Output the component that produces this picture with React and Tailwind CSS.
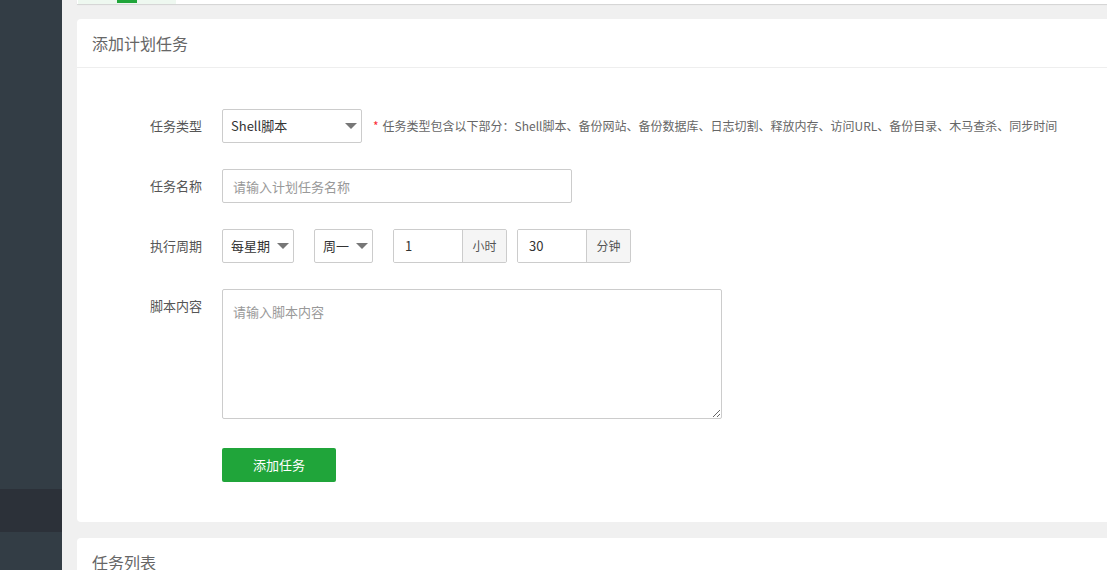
const FONT = { fontFamily: '"Noto Sans CJK SC", "Noto Sans", sans-serif' };

function Caret() {
  return (
    <span className="ml-auto w-0 h-0 border-l-[6px] border-r-[6px] border-t-[6px] border-l-transparent border-r-transparent border-t-[#777]" />
  );
}

function Row({ label, children, top = false }) {
  return (
    <div className={`flex ${top ? "items-start" : "items-center"}`}>
      <div className="w-[125px] shrink-0 text-right leading-[34px] text-[13px] text-[#555]">{label}</div>
      <div className="ml-[20px] flex items-center">{children}</div>
    </div>
  );
}

function Select({ value, w }) {
  return (
    <div
      className={`${w} h-[34px] flex items-center border border-[#ccc] rounded-[2px] bg-white pl-[8px] pr-[4px] text-[13px] text-[#333]`}
    >
      <span>{value}</span>
      <Caret />
    </div>
  );
}

function Group({ value, unit }) {
  return (
    <div className="flex h-[34px] border border-[#ccc] rounded-[2px] overflow-hidden text-[13px]">
      <input
        defaultValue={value}
        className="w-[68px] px-[11px] outline-none text-[#333] bg-white"
      />
      <div className="w-[44px] flex items-center justify-center border-l border-[#ccc] bg-[#f5f5f5] text-[#555] text-[12px]">
        {unit}
      </div>
    </div>
  );
}

export default function App() {
  return (
    <div className="flex h-[570px] overflow-hidden bg-[#f0f0f0]" style={FONT}>
      {/* sidebar */}
      <aside className="w-[62px] shrink-0 bg-[#333d45] flex flex-col">
        <div className="h-[489px] shrink-0" />
        <div className="h-[43px] shrink-0 bg-[#2c3139]" />
      </aside>

      <main className="flex-1 pl-[15px] -mr-[20px] flex flex-col">
        {/* top tabs card (scrolled) */}
        <div className="h-[4px] shrink-0 bg-white shadow-[0_1px_1px_rgba(0,0,0,0.12)] flex">
          <div className="ml-px w-[98px] bg-[#eef8f0] flex justify-center">
            <div className="w-[20px] h-[3px] bg-[#20a53a]" />
          </div>
        </div>

        {/* add task card */}
        <section className="mt-[15px] shrink-0 bg-white rounded-[4px]">
          <div className="h-[49px] flex items-center pl-[15px] border-b border-[#eee] text-[16px] text-[#666]">
            添加计划任务
          </div>
          <div className="pt-[41px] pb-[40px] flex flex-col gap-[26px]">
            <Row label="任务类型">
              <Select value="Shell脚本" w="w-[140px]" />
              <span className="ml-[11px] text-[12px] text-[#666]">
                <span className="text-red-500 mr-[4px]">*</span>
                任务类型包含以下部分：Shell脚本、备份网站、备份数据库、日志切割、释放内存、访问URL、备份目录、木马查杀、同步时间
              </span>
            </Row>
            <Row label="任务名称">
              <input
                placeholder="请输入计划任务名称"
                className="w-[350px] h-[34px] border border-[#ccc] rounded-[2px] px-[10px] text-[13px] outline-none placeholder:text-[#999]"
              />
            </Row>
            <Row label="执行周期">
              <Select value="每星期" w="w-[72px]" />
              <div className="ml-[20px]">
                <Select value="周一" w="w-[59px]" />
              </div>
              <div className="ml-[20px]">
                <Group value="1" unit="小时" />
              </div>
              <div className="ml-[10px]">
                <Group value="30" unit="分钟" />
              </div>
            </Row>
            <Row label="脚本内容" top>
              <textarea
                placeholder="请输入脚本内容"
                className="block w-[500px] h-[130px] border border-[#ccc] rounded-[2px] px-[10px] py-[12px] text-[13px] leading-[20px] outline-none placeholder:text-[#999]"
              />
            </Row>
            <div className="ml-[145px] mt-[3px]">
              <button className="w-[114px] h-[34px] rounded-[2px] bg-[#20a53a] text-white text-[13px]">
                添加任务
              </button>
            </div>
          </div>
        </section>

        {/* task list card */}
        <section className="mt-[16px] shrink-0 bg-white rounded-[4px] h-[100px]">
          <div className="h-[49px] flex items-center pl-[15px] border-b border-[#eee] text-[16px] text-[#666]">
            任务列表
          </div>
        </section>
      </main>
    </div>
  );
}
